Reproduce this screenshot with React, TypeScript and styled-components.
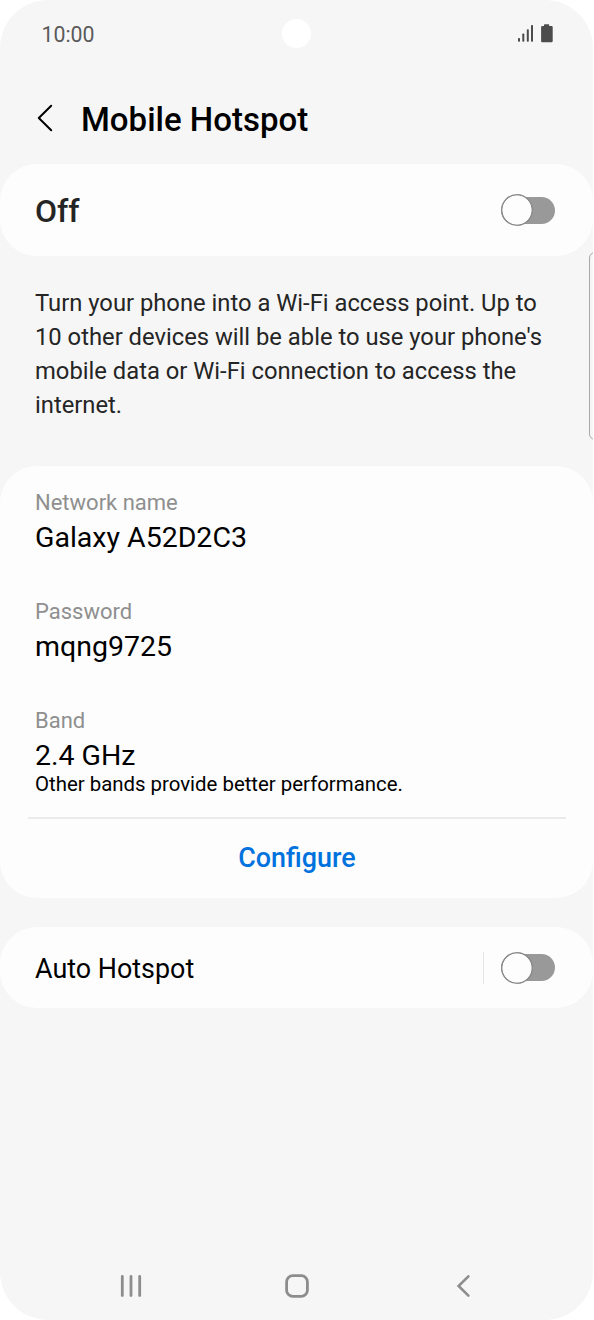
import React from "react";
import styled, { createGlobalStyle } from "styled-components";

const GlobalStyle = createGlobalStyle`
  * { box-sizing: border-box; }
  body { margin: 0; background: #fff; font-family: Roboto, "Liberation Sans", sans-serif; }
  h1, h2, p { margin: 0; font-weight: 400; }
  button { border: 0; padding: 0; background: none; font: inherit; color: inherit; display: block; }
  svg { display: block; }
`;

const Phone = styled.div`
  position: relative;
  width: 593px;
  height: 1320px;
  border-radius: 48px;
  overflow: hidden;
  background: #f6f6f6;
  display: flex;
  flex-direction: column;
`;

const StatusBar = styled.div`
  height: 68px;
  padding: 0 40px 0 41.5px;
  display: flex;
  align-items: center;
  justify-content: space-between;
`;

const Clock = styled.span`
  padding-top: 1px;
  font-size: 21.3px;
  line-height: 24px;
  color: #5a5a5a;
`;

const Camera = styled.div`
  position: absolute;
  left: 282px;
  top: 19px;
  width: 29px;
  height: 29px;
  border-radius: 50%;
  background: #fff;
`;

const Header = styled.header`
  height: 96px;
  padding: 7px 0 0 37px;
  display: flex;
  align-items: center;
`;

const BackButton = styled.button`
  width: 44px;
  padding-bottom: 3px;
`;

const Title = styled.h1`
  && { font-weight: 500; }
  font-size: 33px;
  line-height: 40px;
  color: #000;
`;

const Card = styled.section<{ $h: number }>`
  flex: none;
  height: ${(p) => p.$h}px;
  border-radius: 37px;
  background: #fdfdfd;
`;

const SwitchCard = styled(Card)`
  padding: 0 38px 0 35px;
  display: flex;
  align-items: center;
`;

const State = styled.span`
  flex: 1;
  padding-top: 2px;
  font-size: 32px;
  line-height: 40px;
  font-weight: 500;
  color: #252525;
`;

const RowLabel = styled.span`
  flex: 1;
  padding-top: 3px;
  font-size: 26.9px;
  line-height: 34px;
  color: #000;
`;

const Separator = styled.span`
  width: 1px;
  height: 32px;
  margin-right: 17px;
  background: #e6e6e6;
`;

const Track = styled.button`
  width: 54px;
  height: 27px;
  border-radius: 14px;
  background: #999;
  display: flex;
  align-items: center;
`;

const Thumb = styled.span`
  flex: none;
  width: 32px;
  height: 32px;
  border-radius: 50%;
  background: radial-gradient(circle, #fdfdfd 14.2px, #8b8b8b 14.9px);
`;

const Description = styled.p`
  height: 210px;
  padding: 30px 40px 0 35px;
  font-size: 23.78px;
  line-height: 34px;
  color: #252525;
`;

const Details = styled(Card)`
  padding: 20px 27px 0 28px;
  margin-bottom: 29px;
  display: flex;
  flex-direction: column;
`;

const Field = styled.div`
  padding-left: 7px;
  margin-bottom: 41px;
  &:last-of-type { margin-bottom: 21px; }
`;

const FieldLabel = styled.p`
  font-size: 22px;
  line-height: 34px;
  color: #8f8f8f;
`;

const FieldValue = styled.p`
  padding-top: 1px;
  margin-bottom: -1px;
  font-size: 28.5px;
  line-height: 34px;
  color: #000;
`;

const FieldNote = styled.p`
  font-size: 20.4px;
  line-height: 24px;
  color: #000;
`;

const Configure = styled.button`
  && {
    height: 81px;
    padding-bottom: 2px;
    border-top: 2px solid #ebebeb;
    font-size: 26.9px;
    font-weight: 500;
    color: #0072de;
  }
`;

const NavBar = styled.nav`
  margin-top: auto;
  height: 68px;
  padding: 0 118px 0 119px;
  display: grid;
  grid-template-columns: 1fr 24px 1fr;
  align-items: center;

  & > :last-child { justify-self: end; margin-right: 3px; }
`;

const EdgeHandle = styled.div`
  position: absolute;
  left: 589px;
  top: 252px;
  width: 12px;
  height: 188px;
  border: 1px solid #a9a9a9;
  border-radius: 6px;
`;

const Switch = () => (
  <Track role="switch" aria-checked={false}>
    <Thumb />
  </Track>
);

const fields = [
  { label: "Network name", value: "Galaxy A52D2C3" },
  { label: "Password", value: "mqng9725" },
  { label: "Band", value: "2.4 GHz", note: "Other bands provide better performance." },
];

export default function App() {
  return (
    <>
      <GlobalStyle />
      <Phone>
        <StatusBar>
          <Clock>10:00</Clock>
          <svg width="36" height="20" viewBox="0 0 36 20" fill="#4c4c4c">
            <rect x="1" y="14" width="2" height="3.8" rx=".8" />
            <rect x="5.3" y="9.5" width="2" height="8.3" rx=".8" />
            <rect x="9.8" y="5.2" width="2" height="12.6" rx=".8" />
            <rect x="14" y="1" width="2" height="16.8" rx=".8" />
            <path d="M27 2V.9Q27 .2 27.7.2H31.5Q32.2.2 32.2.9V2H34.6Q35.7 2 35.7 3.2V17Q35.7 18.2 34.6 18.2H25.2Q24.1 18.2 24.1 17V3.2Q24.1 2 25.2 2Z" />
          </svg>
        </StatusBar>
        <Camera />
        <Header>
          <BackButton aria-label="Back">
            <svg width="18" height="28" viewBox="0 0 18 28" fill="none" stroke="#000" strokeWidth="2" strokeLinecap="round" strokeLinejoin="round">
              <path d="M14.2 1.8 1.8 14 14.2 26.2" />
            </svg>
          </BackButton>
          <Title>Mobile Hotspot</Title>
        </Header>
        <SwitchCard $h={92}>
          <State>Off</State>
          <Switch />
        </SwitchCard>
        <Description>
          Turn your phone into a Wi-Fi access point. Up to
          <br />
          10 other devices will be able to use your phone's
          <br />
          mobile data or Wi-Fi connection to access the
          <br />
          internet.
        </Description>
        <Details $h={432}>
          {fields.map((f) => (
            <Field key={f.label}>
              <FieldLabel>{f.label}</FieldLabel>
              <FieldValue>{f.value}</FieldValue>
              {f.note && <FieldNote>{f.note}</FieldNote>}
            </Field>
          ))}
          <Configure>Configure</Configure>
        </Details>
        <SwitchCard $h={81}>
          <RowLabel>Auto Hotspot</RowLabel>
          <Separator />
          <Switch />
        </SwitchCard>
        <NavBar>
          <svg width="24" height="24" viewBox="0 0 24 24" stroke="#8d8d8d" strokeWidth="2.8" strokeLinecap="round">
            <path d="M3.3 2.4V21.6M12 2.4V21.6M20.7 2.4V21.6" />
          </svg>
          <svg width="24" height="24" viewBox="0 0 24 24" fill="none" stroke="#8d8d8d" strokeWidth="2.8">
            <rect x="1.6" y="1.6" width="20.8" height="20.8" rx="6.2" />
          </svg>
          <svg width="16" height="24" viewBox="0 0 16 24" fill="none" stroke="#8d8d8d" strokeWidth="2.6" strokeLinecap="round" strokeLinejoin="miter">
            <path d="M12.4 2.4 2.6 12 12.4 21.6" />
          </svg>
        </NavBar>
        <EdgeHandle />
      </Phone>
    </>
  );
}
